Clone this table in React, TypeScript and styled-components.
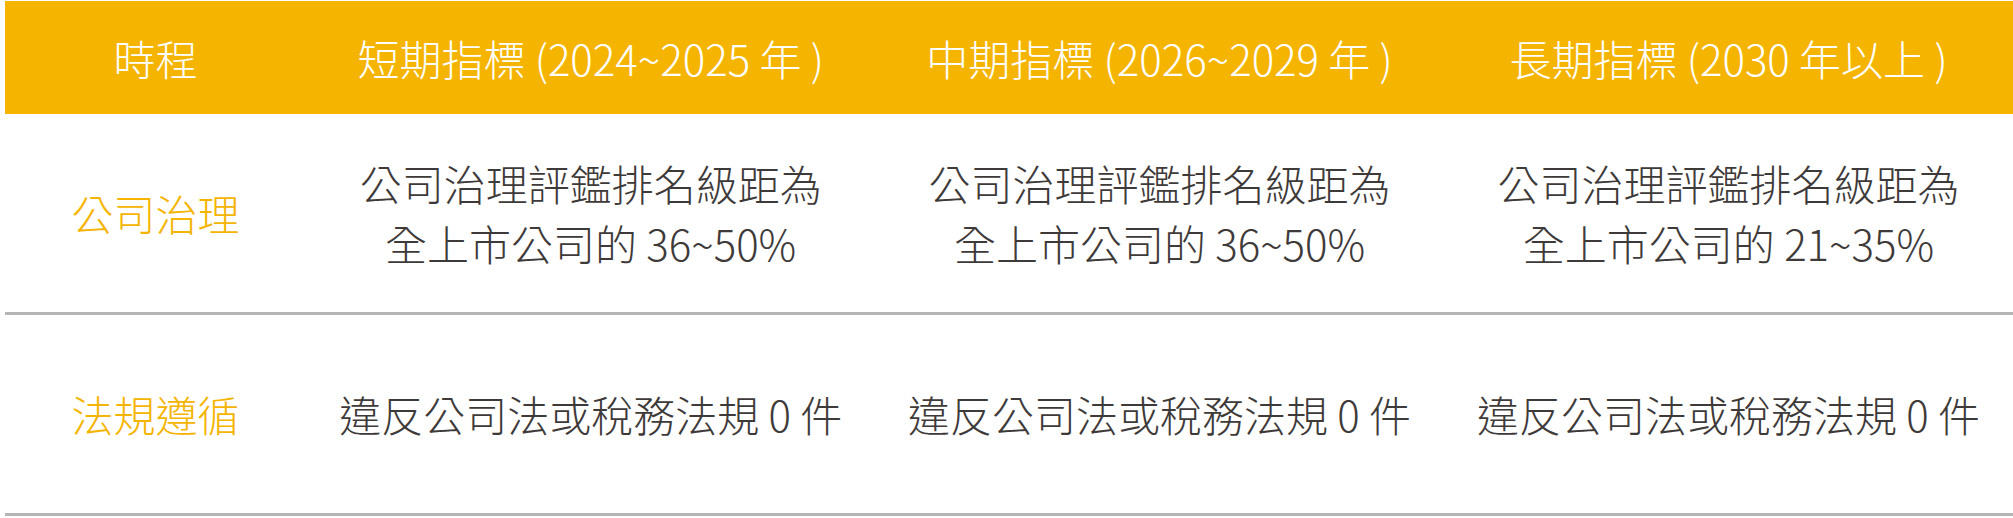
import React from "react";
import styled, { createGlobalStyle } from "styled-components";

const GlobalStyle = createGlobalStyle`
  html, body {
    margin: 0;
    padding: 0;
    background: #ffffff;
  }
  body {
    font-family: "Noto Sans CJK TC", "Noto Sans", sans-serif;
  }
`;

const Wrapper = styled.div`
  padding: 1px 0 0 5px;
  overflow: hidden;
`;

const Table = styled.div`
  display: grid;
  grid-template-columns: 15% repeat(3, 1fr);
  width: 2008px;
`;

const HeadCell = styled.div`
  height: 113px;
  background: #f5b400;
  color: #ffffff;
  display: flex;
  align-items: center;
  justify-content: center;
  font-size: 42px;
  font-weight: 300;
  line-height: 1;
  white-space: nowrap;
`;

const BodyCell = styled.div<{ $label?: boolean }>`
  height: 198px;
  border-bottom: 3px solid #b5b5b5;
  display: flex;
  align-items: center;
  justify-content: center;
  text-align: center;
  font-size: 42px;
  font-weight: 300;
  line-height: 60px;
  color: ${({ $label }) => ($label ? "#f5b400" : "#3e3a39")};
`;

const headers = [
  "時程",
  "短期指標 (2024~2025 年 )",
  "中期指標 (2026~2029 年 )",
  "長期指標 (2030 年以上 )",
];

const rows: { label: string; cells: string[][] }[] = [
  {
    label: "公司治理",
    cells: [
      ["公司治理評鑑排名級距為", "全上市公司的 36~50%"],
      ["公司治理評鑑排名級距為", "全上市公司的 36~50%"],
      ["公司治理評鑑排名級距為", "全上市公司的 21~35%"],
    ],
  },
  {
    label: "法規遵循",
    cells: [
      ["違反公司法或稅務法規 0 件"],
      ["違反公司法或稅務法規 0 件"],
      ["違反公司法或稅務法規 0 件"],
    ],
  },
];

export default function App() {
  return (
    <>
      <GlobalStyle />
      <Wrapper>
        <Table>
          {headers.map((h) => (
            <HeadCell key={h}>{h}</HeadCell>
          ))}
          {rows.map((row) => (
            <React.Fragment key={row.label}>
              <BodyCell $label>{row.label}</BodyCell>
              {row.cells.map((lines, i) => (
                <BodyCell key={i}>
                  <div>
                    {lines.map((l, j) => (
                      <div key={j}>{l}</div>
                    ))}
                  </div>
                </BodyCell>
              ))}
            </React.Fragment>
          ))}
        </Table>
      </Wrapper>
    </>
  );
}
